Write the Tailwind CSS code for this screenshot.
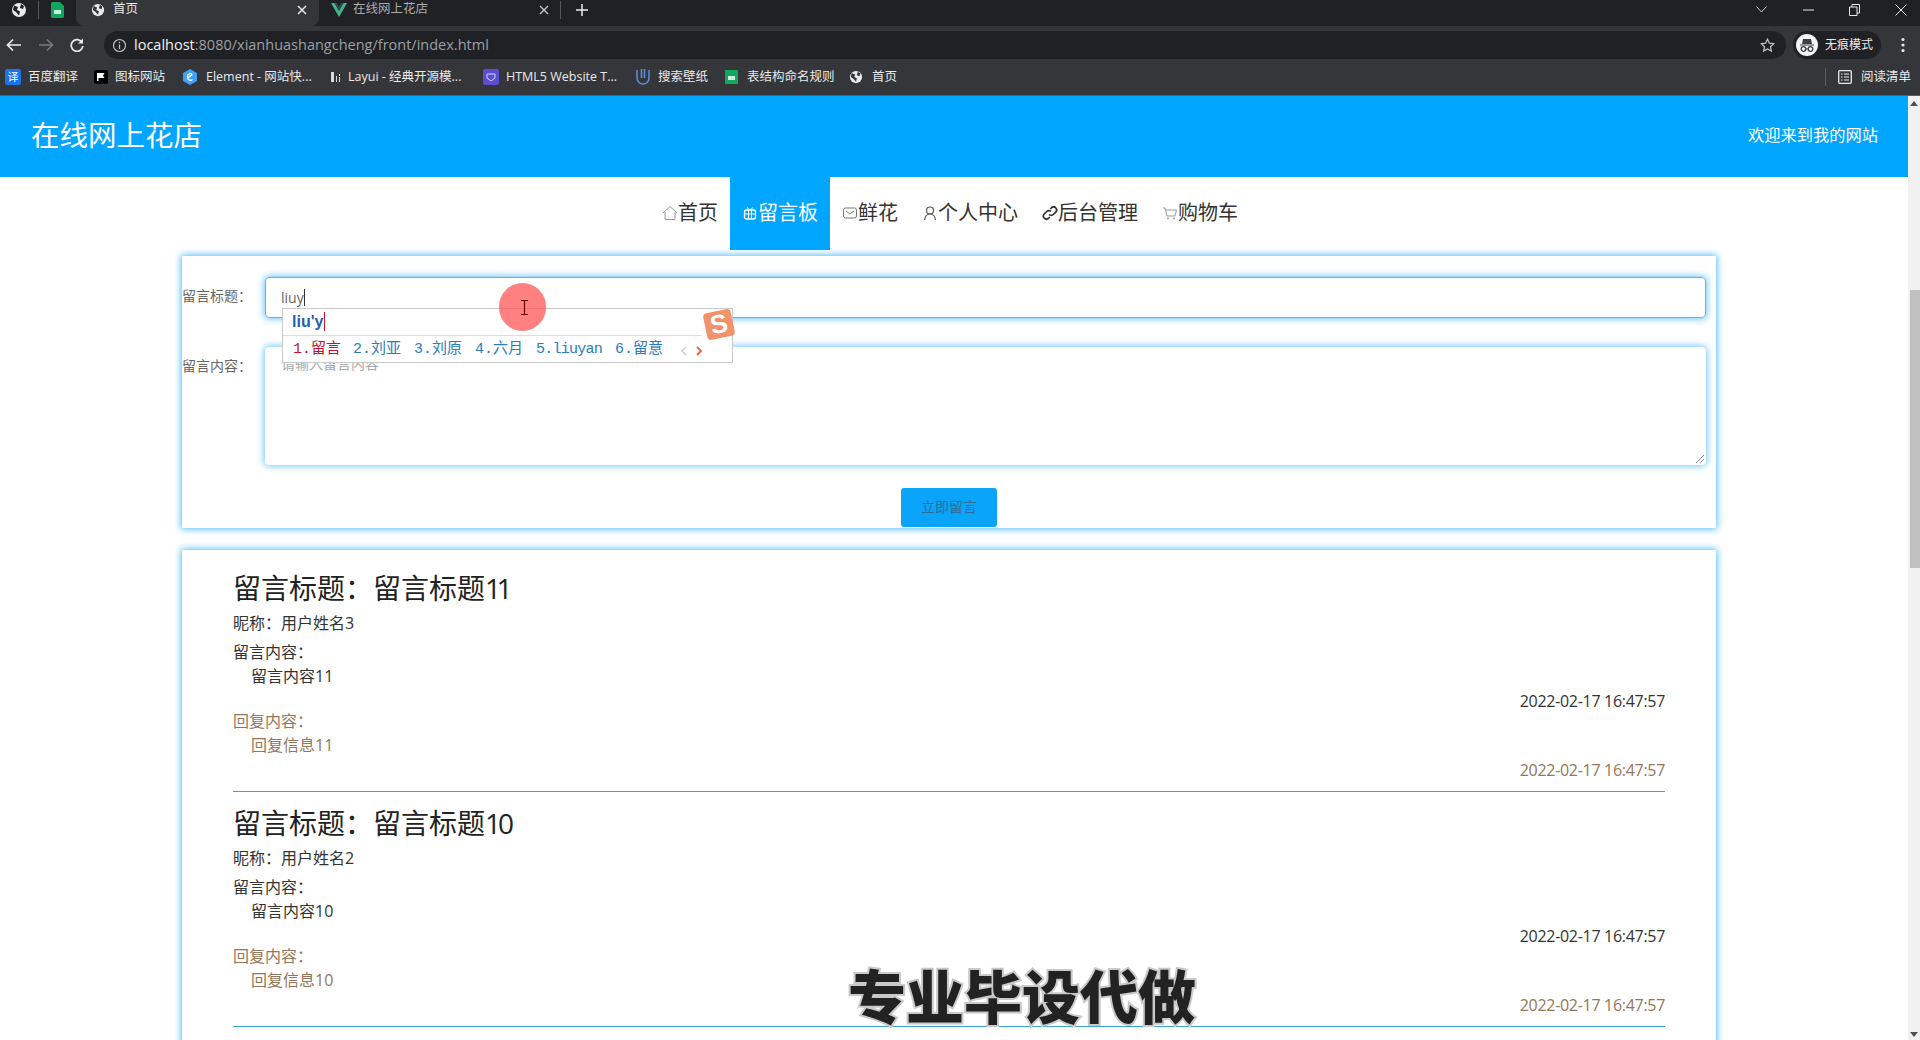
<!DOCTYPE html>
<html lang="zh">
<head>
<meta charset="utf-8">
<title>在线网上花店</title>
<script src="https://cdn.jsdelivr.net/npm/@tailwindcss/browser@4"></script>
</head>
<body class="m-0 bg-white">
<div class="relative w-[1920px] h-[1040px] overflow-hidden flex flex-col font-['Open_Sans','Noto_Sans_CJK_SC',sans-serif] text-[#333]">

  <!-- tab strip -->
  <div class="h-[26px] bg-[#202124] flex items-center shrink-0 text-[12.500px] text-[#e8eaed]">
    <div class="w-[38px] flex justify-center pb-[7px]"><svg width="16" height="16" viewBox="0 0 16 16"><circle cx="8" cy="8" r="7" fill="#e8eaed"/><path d="M3 3.500 7 5 6 8l3 1.500-1 4L5 10 2 8zM10 2l3 2-1 3-3-1z" fill="#202124"/></svg></div>
    <div class="w-px h-[18px] bg-[#55575b] mb-[7px]"></div>
    <div class="w-[37px] flex justify-center pb-[7px]"><svg width="13" height="16" viewBox="0 0 13 16"><path d="M0 1.500A1.500 1.500 0 0 1 1.500 0H9l4 4v10.500a1.500 1.500 0 0 1-1.500 1.500h-10A1.500 1.500 0 0 1 0 14.500z" fill="#10a85f"/><rect x="3" y="8" width="7" height="4" fill="#cdeedd"/></svg></div>
    <div class="w-[243px] h-[26px] bg-[#35363a] rounded-b-lg flex items-center pl-[15px] pr-[12px] pb-[7px] gap-2">
      <svg width="14" height="14" viewBox="0 0 16 16"><circle cx="8" cy="8" r="7" fill="#e8eaed"/><path d="M3 3.500 7 5 6 8l3 1.500-1 4L5 10 2 8zM10 2l3 2-1 3-3-1z" fill="#35363a"/></svg>
      <span class="flex-1">首页</span>
      <svg width="10" height="10" viewBox="0 0 10 10"><path d="M1 1l8 8M9 1 1 9" stroke="#e8eaed" stroke-width="1.500"/></svg>
    </div>
    <div class="w-[241px] h-[26px] flex items-center pl-[12px] pr-[11px] pb-[7px] gap-[5px] text-[#a9abae]">
      <svg width="16" height="14" viewBox="0 0 16 14"><path d="M0 0h3.500L8 8l4.500-8H16L8 14z" fill="#41b883"/><path d="M3.500 0H6l2 3.500L10 0h2.500L8 8z" fill="#35495e"/></svg>
      <span class="flex-1 ml-[1px]">在线网上花店</span>
      <svg width="10" height="10" viewBox="0 0 10 10"><path d="M1 1l8 8M9 1 1 9" stroke="#c4c6c9" stroke-width="1.400"/></svg>
    </div>
    <div class="w-px h-[18px] bg-[#55575b] mb-[7px]"></div>
    <svg class="ml-[15px] mb-[7px]" width="12" height="12" viewBox="0 0 12 12"><path d="M6 0v12M0 6h12" stroke="#e8eaed" stroke-width="1.500"/></svg>
    <div class="ml-auto flex items-center pb-[7px]">
      <svg width="11" height="7" viewBox="0 0 11 7"><path d="M.5.500l5 5.500 5-5.500" stroke="#c4c6c9" fill="none"/></svg>
      <svg class="ml-[36px]" width="11" height="2" viewBox="0 0 11 2"><path d="M0 1h11" stroke="#e8eaed"/></svg>
      <svg class="ml-[35px]" width="11" height="12" viewBox="0 0 11 12"><path d="M3 3V.500h7.500V9H8M.5 3H8v8.500H.5z" stroke="#e8eaed" fill="none"/></svg>
      <svg class="ml-[35px] mr-[13px]" width="12" height="12" viewBox="0 0 12 12"><path d="M.5.500l11 11M11.500.500l-11 11" stroke="#e8eaed"/></svg>
    </div>
  </div>

  <!-- toolbar -->
  <div class="h-[38px] bg-[#35363a] flex items-center shrink-0">
    <svg class="ml-[6px]" width="16" height="14" viewBox="0 0 16 14"><path d="M15 7H2M7 1.500 1.500 7 7 12.500" stroke="#e8eaed" stroke-width="1.700" fill="none"/></svg>
    <svg class="ml-[16px]" width="16" height="14" viewBox="0 0 16 14"><path d="M1 7h13M9 1.500 14.500 7 9 12.500" stroke="#77797c" stroke-width="1.700" fill="none"/></svg>
    <svg class="ml-[16px]" width="14" height="14" viewBox="0 0 14 14"><path d="M12 4.500A5.800 5.800 0 1 0 12.800 8" stroke="#e8eaed" stroke-width="1.700" fill="none"/><path d="M13 .5v5H8z" fill="#e8eaed"/></svg>
    <div class="ml-[20px] w-[1682px] h-[28px] rounded-full bg-[#202124] flex items-center pl-[8px] pr-[11px] text-[14.500px]">
      <svg width="15" height="15" viewBox="0 0 15 15"><circle cx="7.500" cy="7.500" r="6" stroke="#bdc1c6" fill="none" stroke-width="1.200"/><path d="M7.500 6.500v4.500M7.500 3.800v1.500" stroke="#bdc1c6" stroke-width="1.300"/></svg>
      <span class="ml-[7px] text-[#f1f3f4]">localhost</span><span class="text-[#9aa0a6]">:8080/xianhuashangcheng/front/index.html</span>
      <svg class="ml-auto" width="15" height="15" viewBox="0 0 15 15"><path d="M7.500 1.200l1.900 4 4.300.5-3.200 3 .9 4.400-3.900-2.200-3.900 2.200.9-4.400-3.200-3 4.300-.5z" stroke="#c4c6c9" stroke-width="1.200" fill="none"/></svg>
    </div>
    <div class="ml-[7px] w-[88px] h-[28px] rounded-full bg-[#202124] flex items-center pl-[3px] gap-[7px] text-[12px] text-[#e8eaed]">
      <svg width="22" height="22" viewBox="0 0 22 22"><circle cx="11" cy="11" r="11" fill="#f1f3f4"/><path d="M7 5h8l1 5H6zM4 10.500h14v1H4z" fill="#3c4043"/><circle cx="7.500" cy="15" r="2.300" stroke="#3c4043" fill="none" stroke-width="1.300"/><circle cx="14.500" cy="15" r="2.300" stroke="#3c4043" fill="none" stroke-width="1.300"/><path d="M9.800 15h2.400" stroke="#3c4043"/></svg>
      <span>无痕模式</span>
    </div>
    <svg class="ml-[20px]" width="4" height="16" viewBox="0 0 4 16"><circle cx="2" cy="2.500" r="1.600" fill="#e8eaed"/><circle cx="2" cy="8" r="1.600" fill="#e8eaed"/><circle cx="2" cy="13.500" r="1.600" fill="#e8eaed"/></svg>
  </div>

  <!-- bookmarks -->
  <div class="h-[32px] bg-[#35363a] border-b border-[#5b5d61] flex items-center shrink-0 text-[12.500px] text-[#e8eaed] pl-[5px] pb-[5px]">
    <div class="flex items-center gap-[7px] w-[97px]"><span class="w-[16px] h-[16px] rounded-[2px] bg-[#1a73e8] text-white text-[11px] leading-[16px] text-center">译</span><span>百度翻译</span></div>
    <div class="flex items-center gap-[7px] w-[87px] ml-[-8px]"><svg width="14" height="14" viewBox="0 0 14 14"><rect width="14" height="14" rx="2" fill="#000"/><path d="M3 3h7.500l-1.500 2.500L10.500 8H4.500v3H3z" fill="#fff"/></svg><span>图标网站</span></div>
    <div class="flex items-center gap-[9px] w-[153px] ml-[2px]"><svg width="14" height="16" viewBox="0 0 14 16"><path d="M7 0l7 4v8l-7 4-7-4V4z" fill="#409eff"/><path d="M9.500 5.500 4.500 9c.5 2 3 3 5 1.500M4.500 8A3 3 0 0 1 9 5" stroke="#fff" fill="none" stroke-width="1.300"/></svg><span class="whitespace-nowrap">Element - 网站快...</span></div>
    <div class="flex items-center gap-[7px] w-[154px] ml-[-7px]"><svg width="12" height="12" viewBox="0 0 12 12"><path d="M2 1v10h3V1zM7 5h1v6H7zM10 3h1v2h-1zM10 6h1v5h-1z" fill="#d7d9dc"/></svg><span class="whitespace-nowrap">Layui - 经典开源模...</span></div>
    <div class="flex items-center gap-[7px] w-[153px]"><svg width="16" height="16" viewBox="0 0 16 16"><rect width="16" height="16" rx="2" fill="#5b4fd1"/><path d="M4 5h8v4l-4 3-4-3z" stroke="#d8d4ff" fill="none"/></svg><span class="whitespace-nowrap">HTML5 Website T...</span></div>
    <div class="flex items-center gap-[8px] w-[89px]"><svg width="14" height="16" viewBox="0 0 14 16"><path d="M1 1v8a6 6 0 0 0 12 0V1" stroke="#5f8fe8" stroke-width="1.500" fill="none"/><path d="M5.500 0v9M8.500 0v9" stroke="#5f8fe8" stroke-width="1.500"/></svg><span>搜索壁纸</span></div>
    <div class="flex items-center gap-[9px] w-[124px]"><svg width="13" height="14" viewBox="0 0 13 14"><path d="M0 1a1 1 0 0 1 1-1h11a1 1 0 0 1 1 1v12a1 1 0 0 1-1 1H1a1 1 0 0 1-1-1z" fill="#10a85f"/><rect x="3" y="6" width="7" height="4" fill="#cdeedd"/></svg><span>表结构命名规则</span></div>
    <div class="flex items-center gap-[9px]"><svg width="14" height="14" viewBox="0 0 16 16"><circle cx="8" cy="8" r="7" fill="#e8eaed"/><path d="M3 3.500 7 5 6 8l3 1.500-1 4L5 10 2 8zM10 2l3 2-1 3-3-1z" fill="#35363a"/></svg><span>首页</span></div>
    <div class="ml-auto w-px h-[18px] bg-[#5b5d61]"></div>
    <svg class="ml-[12px]" width="14" height="14" viewBox="0 0 14 14"><rect x=".7" y=".7" width="12.600" height="12.600" rx="1" stroke="#e8eaed" fill="none" stroke-width="1.300"/><path d="M3 4h1.500M6 4h5M3 7h1.500M6 7h5M3 10h1.500M6 10h5" stroke="#e8eaed"/></svg>
    <span class="ml-[9px] mr-[9px]">阅读清单</span>
  </div>

  <!-- page + scrollbar -->
  <div class="flex-1 flex min-h-0">
    <div class="flex-1 min-w-0 overflow-hidden">
      <header class="h-[81px] bg-[#00a6ff] flex items-center justify-between pl-[31px] pr-[30px] pb-[2px] text-white">
        <span class="text-[28.500px]">在线网上花店</span>
        <span class="text-[16.250px]">欢迎来到我的网站</span>
      </header>

      <nav class="h-[73px] flex justify-center pr-[8px] text-[20px]">
        <a class="flex items-center px-3 pb-[2px]"><svg width="16" height="16" viewBox="0 0 16 16"><path d="M1 8l7-6.500L15 8M3 7v7.500h10V7" stroke="#999" fill="none"/></svg>首页</a>
        <a class="flex items-center px-3 pb-[2px] bg-[#00a6ff] text-white"><svg width="16" height="16" viewBox="0 0 16 16"><rect x="2.500" y="5" width="11" height="9" rx="2" stroke="#fff" fill="none" stroke-width="1.300"/><path d="M2.500 9h11M6.500 5v9M9.500 5v9M5 2.500 8 5l3-2.500" stroke="#fff" fill="none"/></svg>留言板</a>
        <a class="flex items-center px-3 pb-[2px]"><svg width="16" height="16" viewBox="0 0 16 16"><rect x="1.500" y="3" width="13" height="10" rx="2" stroke="#777" fill="none"/><path d="M4 6l4 3 4-3" stroke="#777" fill="none"/></svg>鲜花</a>
        <a class="flex items-center px-3 pb-[2px]"><svg width="16" height="16" viewBox="0 0 16 16"><circle cx="8" cy="5.500" r="3.500" stroke="#555" fill="none" stroke-width="1.200"/><path d="M2.500 15c.5-4 2.500-6 5.500-6s5 2 5.500 6" stroke="#555" fill="none" stroke-width="1.200"/></svg>个人中心</a>
        <a class="flex items-center px-3 pb-[2px]"><svg width="16" height="16" viewBox="0 0 16 16"><path d="M7 9.500a3 3 0 0 0 4.300 0l2.400-2.400a3 3 0 0 0-4.300-4.300L8.300 4" stroke="#333" fill="none" stroke-width="1.700"/><path d="M9 6.500a3 3 0 0 0-4.300 0L2.300 8.900a3 3 0 0 0 4.300 4.300L7.700 12" stroke="#333" fill="none" stroke-width="1.700"/></svg>后台管理</a>
        <a class="flex items-center px-3 pb-[2px]"><svg width="16" height="16" viewBox="0 0 16 16"><path d="M1 3h2l2 8h8l1.500-6H4" stroke="#999" fill="none"/><circle cx="6" cy="13.500" r="1" fill="#999"/><circle cx="12" cy="13.500" r="1" fill="#999"/></svg>购物车</a>
      </nav>

      <!-- form card -->
      <section class="ml-[182px] mt-[6px] w-[1534px] h-[272px] bg-white shadow-[0_0_7px_1px_#4dbbff] flex flex-col pt-[21px] pr-[10px] text-[14px] text-[#666]">
        <div class="flex h-[41px]">
          <label class="w-[83px] leading-[38px] whitespace-nowrap">留言标题：</label>
          <div class="flex-1 rounded-[4px] border border-[#66afe9] shadow-[0_0_7px_1px_#6cc4ff] pl-[15px] leading-[39px] text-[#666]">liuy<span class="inline-block w-px h-[17px] bg-[#333] align-[-3px]"></span></div>
        </div>
        <div class="flex h-[118px] mt-[29px]">
          <label class="w-[83px] leading-[38px] whitespace-nowrap">留言内容：</label>
          <div class="relative flex-1 rounded-[4px] shadow-[0_0_7px_1px_#6cc4ff] pl-[16px] pt-[5px] leading-[24px] text-[#aaa]">请输入留言内容
            <svg class="absolute right-[2px] bottom-[2px]" width="9" height="9" viewBox="0 0 9 9"><path d="M1 9l8-8M5 9l4-4" stroke="#888"/></svg>
          </div>
        </div>
        <button class="mt-[23px] ml-[719px] w-[96px] h-[39px] pb-[2px] rounded-[3px] bg-[#0aa4fb] text-[#2a6f9a] text-[14px]">立即留言</button>
      </section>

      <!-- messages -->
      <section class="ml-[182px] mt-[22px] w-[1534px] h-[600px] bg-white shadow-[0_0_7px_1px_#4dbbff] pt-[19px] px-[51px]">
        <article>
          <h2 class="h-[40px] text-[28px] leading-[38px] text-[#222]">留言标题：留言标题<span class="tracking-[-4.500px]">11</span></h2>
          <p class="text-[16px] leading-[28px]">昵称：用户姓名3</p>
          <p class="mt-[3px] text-[16px] leading-[24px]">留言内容：</p>
          <p class="pl-[18px] text-[16px] leading-[24px]">留言内容11</p>
          <p class="h-[21px] pt-[1px] text-right text-[16px] leading-[24px] tracking-[-0.300px]">2022-02-17 16:47:57</p>
          <p class="text-[16px] leading-[24px] text-[#94765a]">回复内容：</p>
          <p class="pl-[18px] text-[16px] leading-[24px] text-[#94765a]">回复信息11</p>
          <p class="h-[21px] pt-[1px] text-right text-[16px] leading-[24px] tracking-[-0.300px] text-[#94765a]">2022-02-17 16:47:57</p>
          <div class="mt-[13px] h-[1px] bg-[#3aa6d0]"></div>
        </article>
        <article class="mt-[12px]">
          <h2 class="h-[40px] text-[28px] leading-[38px] text-[#222]">留言标题：留言标题<span class="tracking-[-3px]">10</span></h2>
          <p class="text-[16px] leading-[28px]">昵称：用户姓名2</p>
          <p class="mt-[3px] text-[16px] leading-[24px]">留言内容：</p>
          <p class="pl-[18px] text-[16px] leading-[24px]">留言内容10</p>
          <p class="h-[21px] pt-[1px] text-right text-[16px] leading-[24px] tracking-[-0.300px]">2022-02-17 16:47:57</p>
          <p class="text-[16px] leading-[24px] text-[#94765a]">回复内容：</p>
          <p class="pl-[18px] text-[16px] leading-[24px] text-[#94765a]">回复信息10</p>
          <p class="h-[21px] pt-[1px] text-right text-[16px] leading-[24px] tracking-[-0.300px] text-[#94765a]">2022-02-17 16:47:57</p>
          <div class="mt-[13px] h-[1px] bg-[#3aa6d0]"></div>
        </article>
      </section>
    </div>

    <!-- scrollbar -->
    <div class="w-[12px] bg-[#f1f1f1] flex flex-col items-center relative shrink-0">
      <svg class="mt-[5px]" width="8" height="5" viewBox="0 0 8 5"><path d="M4 0l4 5H0z" fill="#505050"/></svg>
      <div class="mt-[184px] w-[10px] ml-[2px] h-[278px] bg-[#c1c1c1]"></div>
      <svg class="mt-auto mb-[3px]" width="8" height="5" viewBox="0 0 8 5"><path d="M4 5l4-5H0z" fill="#505050"/></svg>
    </div>
  </div>

  <!-- IME popup -->
  <div class="absolute left-[282px] top-[308px] w-[451px] h-[55px] bg-white border border-[#c9c9c9] font-['Liberation_Sans','Noto_Sans_CJK_SC',sans-serif]">
    <div class="h-[26px] pl-[9px] leading-[26px] text-[16px] font-bold text-[#1f5fae]">liu'y<span class="inline-block w-px h-[19px] ml-px bg-[#c8102e] align-[-4px]"></span></div>
    <div class="h-px w-[418px] bg-[#ddd]"></div>
    <div class="h-[27px] pl-[10px] pt-[2px] flex items-center gap-[13px] text-[15px] text-[#2b7bbd] font-['Liberation_Mono','Noto_Sans_CJK_SC',monospace]">
      <span class="text-[#c8102e]">1.留言</span><span class="-ml-[1px]">2.刘亚</span><span>3.刘原</span><span>4.六月</span><span class="tracking-[-0.750px]">5.liuyan</span><span>6.留意</span>
      <svg class="ml-[5px]" width="6" height="10" viewBox="0 0 6 10"><path d="M5 1 1 5l4 4" stroke="#ccc" stroke-width="1.500" fill="none"/></svg>
      <svg class="ml-[-4px]" width="6" height="10" viewBox="0 0 6 10"><path d="M1 1l4 4-4 4" stroke="#e8643c" stroke-width="1.800" fill="none"/></svg>
    </div>
    <div class="absolute right-[-1px] top-[2px] w-[28px] h-[27px] rotate-[-12deg] rounded-[4px] bg-[#f2926a] text-white text-[26px] font-bold leading-[27px] text-center font-['Liberation_Sans',sans-serif]">S</div>
  </div>

  <!-- cursor highlight -->
  <div class="absolute left-[499px] top-[283px] w-[47px] h-[48px] rounded-full bg-[#ff4a4a]/70 flex items-center justify-center pl-[4px]">
    <svg width="7" height="15" viewBox="0 0 7 15"><path d="M0 .5h7M0 14.500h7M3.500.5v14" stroke="#6b0000" stroke-width="1.200"/></svg>
  </div>

  <!-- watermark -->
  <div class="absolute left-[848px] top-[966px] text-[58px] leading-[62px] font-black text-[#222] whitespace-nowrap [paint-order:stroke_fill] [-webkit-text-stroke:4px_#c9c9c9]">专业毕设代做</div>
</div>
</body>
</html>
